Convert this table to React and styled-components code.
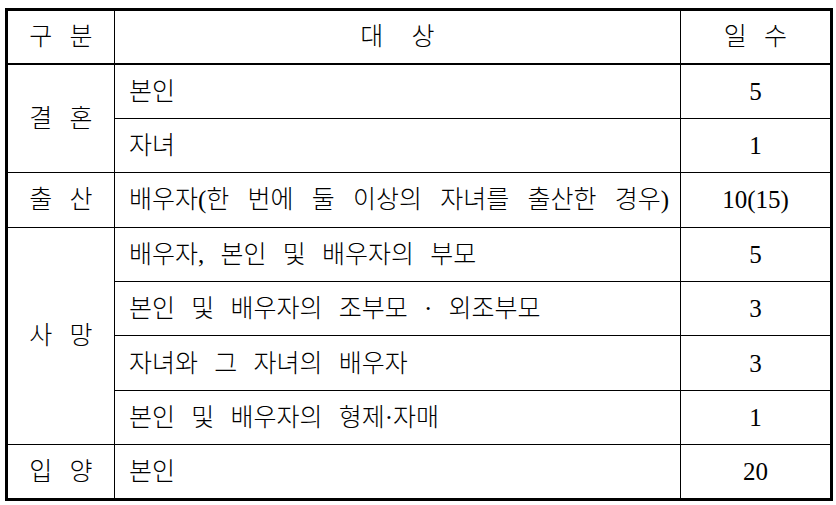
import React from 'react'
import styled, {createGlobalStyle} from 'styled-components'

const GlobalStyle = createGlobalStyle`
  body {
    margin: 0;
    background: #fff;
    font-family: "Liberation Serif", "Noto Sans CJK KR", serif;
    color: #000;
  }
`

const rows = [
    {group: '결 혼', span: 2, target: '본인', days: '5'},
    {target: '자녀', days: '1'},
    {group: '출 산', span: 1, target: '배우자(한 번에 둘 이상의 자녀를 출산한 경우)', days: '10(15)', spread: 12},
    {group: '사 망', span: 4, target: '배우자, 본인 및 배우자의 부모', days: '5'},
    {target: '본인 및 배우자의 조부모 · 외조부모', days: '3'},
    {target: '자녀와 그 자녀의 배우자', days: '3'},
    {target: '본인 및 배우자의 형제·자매', days: '1'},
    {group: '입 양', span: 1, target: '본인', days: '20'},
]

export default function App() {
    return (
        <Page>
            <GlobalStyle/>
            <Table>
                <colgroup>
                    <col style={{width: 108}}/>
                    <col style={{width: 566}}/>
                    <col style={{width: 151}}/>
                </colgroup>
                <thead>
                <Row>
                    <Head>구 분</Head>
                    <Head $gap={22}>대 상</Head>
                    <Head>일 수</Head>
                </Row>
                </thead>
                <tbody>
                {rows.map((r, i) => (
                    <Row key={i}>
                        {r.group && <Group rowSpan={r.span}>{r.group}</Group>}
                        <Target $spread={r.spread}>{r.target}</Target>
                        <Days>{r.days}</Days>
                    </Row>
                ))}
                </tbody>
            </Table>
        </Page>
    )
}

const Page = styled.div`
  padding: 8px 0 0 5px;
`
const Table = styled.table`
  width: 825px;
  table-layout: fixed;
  border-collapse: collapse;
  border: 3px solid #000;
  font-size: 25px;
  font-weight: 300;
`
const Row = styled.tr`
  height: 54.4px;
`
const Cell = styled.td`
  border: 1px solid #000;
  padding: 0;
  vertical-align: middle;
  line-height: 1;
`
const Head = styled(Cell).attrs({as: 'th'})`
  font-weight: 300;
  text-align: center;
  word-spacing: ${p => p.$gap || 11}px;
  border-bottom: 2px solid #000;
`
const Group = styled(Cell)`
  text-align: center;
  word-spacing: 11px;
`
const Target = styled(Cell)`
  padding-left: 14px;
  word-spacing: ${p => p.$spread || 10}px;
  white-space: nowrap;
`
const Days = styled(Cell)`
  text-align: center;
  font-size: 25px;
`
